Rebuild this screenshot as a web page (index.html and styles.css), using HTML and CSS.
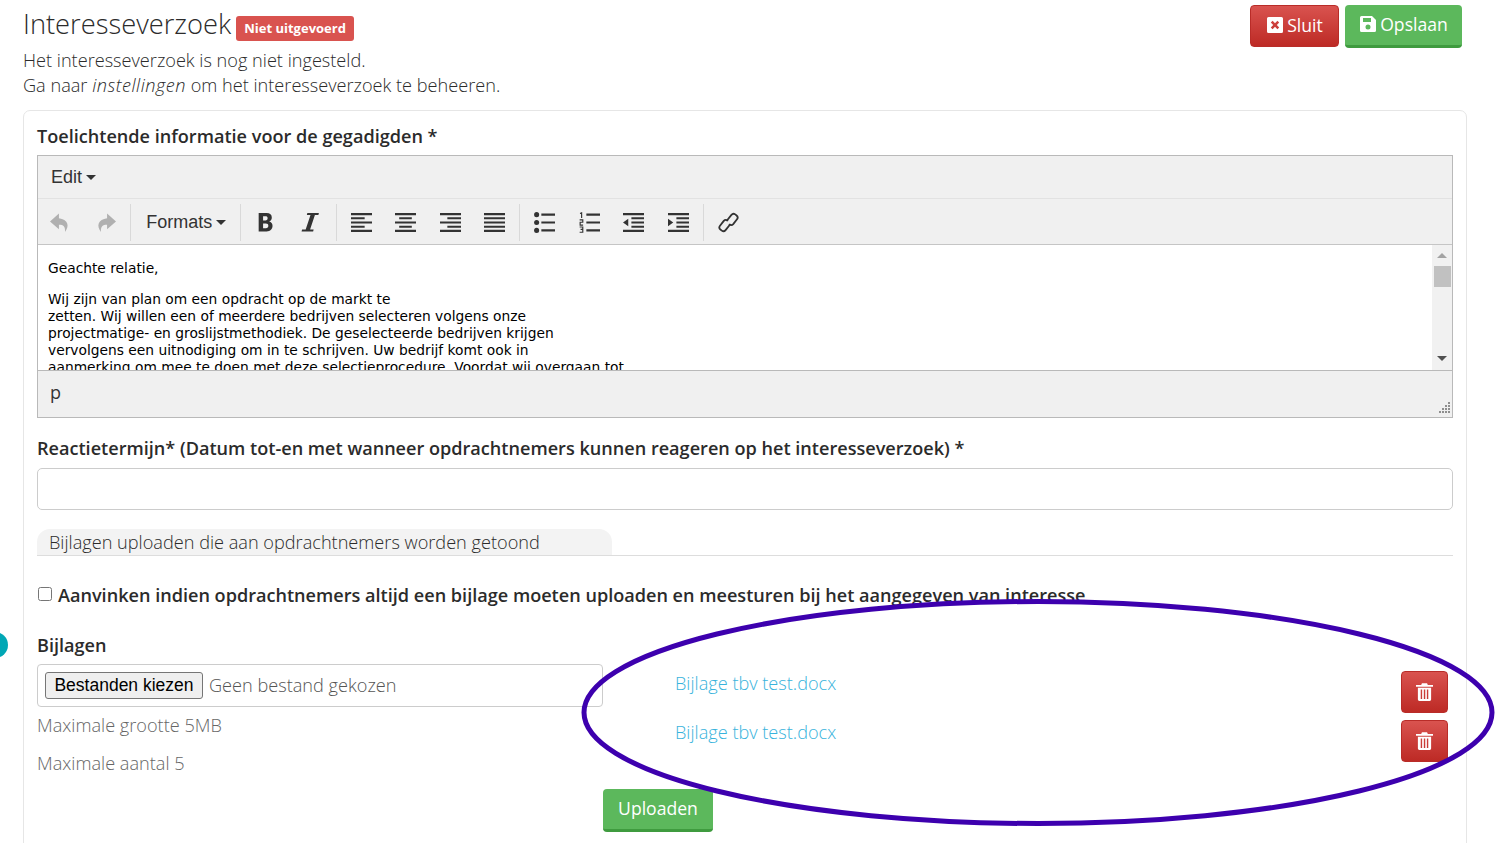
FILE: index.html
```html
<!DOCTYPE html>
<html lang="nl">
<head>
<meta charset="utf-8">
<title>Interesseverzoek</title>
<link rel="stylesheet" href="styles.css">
</head>
<body>
<div class="dot"></div>
<main class="page">
  <header class="head">
    <div class="head-text">
      <h1 class="title">Interesseverzoek <span class="badge">Niet uitgevoerd</span></h1>
    </div>
    <div class="actions">
      <button class="btn btn-red"><svg class="ico" viewBox="0 0 18 18"><path fill="#fff" fill-rule="evenodd" d="M2.500 1h13A1.500 1.500 0 0 1 17 2.500v13a1.500 1.500 0 0 1-1.500 1.500h-13A1.500 1.500 0 0 1 1 15.500v-13A1.500 1.500 0 0 1 2.500 1zM6.600 4.800 4.800 6.600 7.200 9l-2.400 2.400 1.800 1.800L9 10.800l2.400 2.400 1.800-1.800L10.800 9l2.400-2.400-1.800-1.800L9 7.200z"/></svg>Sluit</button>
      <button class="btn btn-green"><svg class="ico" viewBox="0 0 18 18"><path fill="#fff" fill-rule="evenodd" d="M2.500 1h10.500L17 5v10.500a1.500 1.500 0 0 1-1.500 1.500h-13A1.500 1.500 0 0 1 1 15.500v-13A1.500 1.500 0 0 1 2.500 1zM4 3v4h8V3zM9 9.500a2.500 2.500 0 1 0 0 5 2.500 2.500 0 0 0 0-5z"/></svg>Opslaan</button>
    </div>
  </header>
  <p class="intro">Het interesseverzoek is nog niet ingesteld.<br>Ga naar <em class="em">instellingen</em> om het interesseverzoek te beheeren.</p>

  <section class="card">
    <label class="lbl lbl-first">Toelichtende informatie voor de gegadigden *</label>
    <div class="editor">
      <div class="menubar"><span class="menu-item">Edit<i class="caret"></i></span></div>
      <div class="toolbar">
        <div class="tgroup first">
          <svg class="tico muted" viewBox="0 0 20 20"><path fill="currentColor" d="M8.500 1.500 0 9l8.500 7.500v-4.300c4.300 0 6.200 1.600 5.800 6.800C19 13 17 7.200 8.500 6z"/></svg>
          <svg class="tico muted" viewBox="0 0 20 20"><path fill="currentColor" d="M11.500 1.500 20 9l-8.500 7.500v-4.300c-4.300 0-6.200 1.600-5.800 6.800C1 13 3 7.200 11.500 6z"/></svg>
        </div>
        <div class="tgroup formats"><span class="menu-item">Formats<i class="caret"></i></span></div>
        <div class="tgroup text">
          <svg class="tico" viewBox="0 0 20 20"><path fill="currentColor" fill-rule="evenodd" d="M3.500 1h7.500c3.300 0 5 1.500 5 4.200 0 1.900-.9 3.200-2.600 3.800 2.100.5 3.300 2 3.300 4.200 0 3.200-2.100 5.300-5.700 5.300H3.500zM7.700 4.100v3.900h2.300c1.300 0 2-.7 2-2s-.7-1.900-2-1.900zM7.700 10.900v4.500h2.700c1.500 0 2.300-.8 2.300-2.200 0-1.500-.8-2.300-2.300-2.300z"/></svg>
          <svg class="tico" viewBox="0 0 20 20"><path fill="currentColor" d="M7 1h11l-.5 1.800h-3.300L9.600 16.700H13l-.5 1.800h-11l.5-1.800h3.400L10 2.800H6.500z"/></svg>
        </div>
        <div class="tgroup">
          <svg class="tico" viewBox="0 0 20 20"><path fill="currentColor" d="M0 1h20v2H0zM0 5h13v2H0zM0 9h20v2H0zM0 13h13v2H0zM0 17h20v2H0z"/></svg>
          <svg class="tico" viewBox="0 0 20 20"><path fill="currentColor" d="M0 1h20v2H0zM4 5h12v2H4zM0 9h20v2H0zM4 13h12v2H4zM0 17h20v2H0z"/></svg>
          <svg class="tico" viewBox="0 0 20 20"><path fill="currentColor" d="M0 1h20v2H0zM7 5h13v2H7zM0 9h20v2H0zM7 13h13v2H7zM0 17h20v2H0z"/></svg>
          <svg class="tico" viewBox="0 0 20 20"><path fill="currentColor" d="M0 1h20v2H0zM0 5h20v2H0zM0 9h20v2H0zM0 13h20v2H0zM0 17h20v2H0z"/></svg>
        </div>
        <div class="tgroup">
          <svg class="tico" viewBox="0 0 20 20"><circle cx="2.500" cy="2.500" r="2.400" fill="currentColor"/><circle cx="2.500" cy="10" r="2.400" fill="currentColor"/><circle cx="2.500" cy="17.500" r="2.400" fill="currentColor"/><path fill="currentColor" d="M7 1.500h13v2H7zM7 9h13v2H7zM7 16.500h13v2H7z"/></svg>
          <svg class="tico" viewBox="0 0 20 20"><path fill="none" stroke="currentColor" stroke-width="1.100" d="M1 1.500 2.500.8v5M.6 7.500h3v2.300H1.100V12.500h2.800M.6 14.300h3v2.300H1.500h2.100v2.700H.6"/><path fill="currentColor" d="M7 1.500h13v2H7zM7 9h13v2H7zM7 16.500h13v2H7z"/></svg>
          <svg class="tico" viewBox="0 0 20 20"><path fill="currentColor" d="M0 1h20v2H0zM8 5h12v2H8zM8 9h12v2H8zM8 13h12v2H8zM0 17h20v2H0zM5 6.500v7L0 10z"/></svg>
          <svg class="tico" viewBox="0 0 20 20"><path fill="currentColor" d="M0 1h20v2H0zM8 5h12v2H8zM8 9h12v2H8zM8 13h12v2H8zM0 17h20v2H0zM0 6.500v7L5 10z"/></svg>
        </div>
        <div class="tgroup last">
          <svg class="tico" viewBox="0 0 20 20"><g fill="none" stroke="currentColor" stroke-width="1.700" stroke-linecap="round" stroke-linejoin="round"><path d="M8.700 7.800 12.800 2.700a2.600 2.600 0 0 1 3.600-.4l1.300 1a2.600 2.600 0 0 1 .4 3.600L14.500 11.500a2.600 2.600 0 0 1-3.400.5"/><path d="M11.300 12.200 7.200 17.300a2.600 2.600 0 0 1-3.600.4l-1.300-1a2.600 2.600 0 0 1-.4-3.600L5.500 8.500a2.600 2.600 0 0 1 3.400-.5"/></g></svg>
        </div>
      </div>
      <div class="content">
        <div class="doc">
          <p class="doc-p">Geachte relatie,</p>
          <p class="doc-p">Wij zijn van plan om een opdracht op de markt te<br>zetten. Wij willen een of meerdere bedrijven selecteren volgens onze<br>projectmatige- en groslijstmethodiek. De geselecteerde bedrijven krijgen<br>vervolgens een uitnodiging om in te schrijven. Uw bedrijf komt ook in<br>aanmerking om mee te doen met deze selectieprocedure. Voordat wij overgaan tot</p>
        </div>
        <div class="scrollbar">
          <i class="sb-up"></i>
          <i class="sb-thumb"></i>
          <i class="sb-down"></i>
        </div>
      </div>
      <div class="statusbar"><span>p</span>
        <svg class="grip" viewBox="0 0 12 12"><path fill="#8f8f8f" d="M10 0h2v2h-2zM10 3h2v2h-2zM7 3h2v2H7zM10 6h2v2h-2zM7 6h2v2H7zM4 6h2v2H4zM10 9h2v2h-2zM7 9h2v2H7zM4 9h2v2H4zM1 9h2v2H1z"/></svg>
      </div>
    </div>

    <label class="lbl lbl-term">Reactietermijn* (Datum tot-en met wanneer opdrachtnemers kunnen reageren op het interesseverzoek) *</label>
    <input class="field" type="text" aria-label="Reactietermijn">

    <div class="tabline"><span class="tab">Bijlagen uploaden die aan opdrachtnemers worden getoond</span></div>

    <label class="check"><input class="check-box" type="checkbox"><span>Aanvinken indien opdrachtnemers altijd een bijlage moeten uploaden en meesturen bij het aangegeven van interesse</span></label>

    <div class="attach">
      <div class="attach-left">
        <label class="lbl lbl-bij">Bijlagen</label>
        <div class="file"><button class="file-btn">Bestanden kiezen</button><span class="file-name">Geen bestand gekozen</span></div>
        <p class="hint hint-a">Maximale grootte 5MB</p>
        <p class="hint hint-b">Maximale aantal 5</p>
      </div>
      <div class="attach-right">
        <div class="att-row"><a class="att-link" href="#">Bijlage tbv test.docx</a><button class="del" aria-label="Verwijderen"><svg class="trash" viewBox="0 0 18 20"><path fill="#fff" fill-rule="evenodd" d="M0 3h5.500l.8-1.800h5.400L12.500 3H18v2H0zM2 6h14v12.500a1.500 1.500 0 0 1-1.500 1.500h-11A1.500 1.500 0 0 1 2 18.500zM5 8v10h1.500V8zM8.300 8v10h1.500V8zM11.500 8v10H13V8z"/></svg></button></div>
        <div class="att-row"><a class="att-link" href="#">Bijlage tbv test.docx</a><button class="del" aria-label="Verwijderen"><svg class="trash" viewBox="0 0 18 20"><path fill="#fff" fill-rule="evenodd" d="M0 3h5.500l.8-1.800h5.400L12.500 3H18v2H0zM2 6h14v12.500a1.500 1.500 0 0 1-1.500 1.500h-11A1.500 1.500 0 0 1 2 18.500zM5 8v10h1.500V8zM8.300 8v10h1.500V8zM11.500 8v10H13V8z"/></svg></button></div>
      </div>
    </div>
    <div class="upload-row"><button class="btn btn-green btn-upload">Uploaden</button></div>
  </section>
</main>
<svg class="ring" viewBox="0 0 1495 843" aria-hidden="true"><ellipse cx="1038" cy="712.500" rx="454" ry="111" fill="none" stroke="#3d00ae" stroke-width="5"/></svg>
</body>
</html>
```
FILE: styles.css
```css
* { box-sizing: border-box; }
html, body { margin: 0; height: 843px; overflow: hidden; background: #fff; }
body { font-family: "Open Sans", sans-serif; font-weight: 300; font-size: 18.15px; color: #2b2b2b; position: relative; }

.dot { position: absolute; left: -18px; top: 632px; width: 26px; height: 26px; border-radius: 50%; background: #00a7b5; }
.ring { position: absolute; left: 0; top: 0; width: 1495px; height: 843px; pointer-events: none; }

.page { width: 1444px; margin-left: 23px; padding-top: 5px; }

.head { display: flex; justify-content: space-between; align-items: flex-start; height: 43px; padding-right: 5px; }
.title { margin: 0; font-size: 27.3px; line-height: 38px; font-weight: 300; color: #2b2b2b; }
.badge { display: inline-block; vertical-align: 1px; margin-left: -2px; padding: 0 8px; height: 25px; line-height: 25px; font-size: 13px; font-weight: 700; color: #fff; background: #d9534f; border-radius: 3px; }
.actions { display: flex; gap: 6px; }

.btn { display: inline-flex; align-items: center; justify-content: center; border: 0; color: #fff; font-family: "Open Sans", sans-serif; font-size: 17.6px; font-weight: 400; border-radius: 4px; cursor: pointer; }
.btn-red { width: 89px; height: 42px; background: linear-gradient(#d9534f, #bd2a25); border: 1px solid #b92c28; padding: 0 0 2px; }
.btn-green { width: 117px; height: 43px; background: #5cb85c; border-bottom: 3px solid #3f9b3f; padding: 0 0 3px; }
.ico { width: 18px; height: 18px; margin-right: 3px; }

.intro { margin: 0; line-height: 25px; }
.em { letter-spacing: 0.5px; }
.card { margin-top: 12px; height: 740px; border: 1px solid #e6e6e6; border-radius: 7px; padding: 0 13px; }

.lbl { display: block; font-weight: 600; font-size: 18.1px; color: #2b2b2b; line-height: 25px; }
.lbl-first { padding-top: 13px; height: 44px; }
.lbl-term { margin-top: 18px; height: 32px; }
.lbl-bij { height: 31px; }

.editor { border: 1px solid #b9b9b9; height: 263px; background: #f0f0f0; display: flex; flex-direction: column; font-family: "Liberation Sans", Arial, sans-serif; font-weight: 400; color: #333; }
.menubar { height: 43px; display: flex; align-items: center; padding-left: 13px; border-bottom: 1px solid #e2e2e2; }
.menu-item { display: inline-flex; align-items: center; font-size: 18px; color: #333; }
.caret { width: 0; height: 0; margin-left: 4px; border-left: 5px solid transparent; border-right: 5px solid transparent; border-top: 5px solid #333; }
.toolbar { height: 46px; display: flex; align-items: center; padding: 1px 0 0 0.5px; border-bottom: 1px solid #c5c5c5; }
.tgroup { display: flex; align-items: center; height: 37px; border-right: 1px solid #d9d9d9; padding: 0 2.25px; }
.tgroup.first { padding: 0 2.75px 0 0; }
.tgroup.text { padding-right: 3.25px; }
.tgroup.last { border-right: 0; }
.tgroup.formats { padding: 0 14px 0 15px; }
.tgroup .tico { margin: 0 11.75px; }
.tico { width: 21px; height: 21px; color: #333; display: block; flex: none; }
.tico.muted { color: #b0b0b0; }

.content { height: 125px; background: #fff; display: flex; overflow: hidden; }
.doc { flex: 1; padding: 15px 10px 0; font-family: "DejaVu Sans", Verdana, sans-serif; font-size: 13.8px; line-height: 17px; color: #000; overflow: hidden; }
.doc-p { margin: 0 0 14px; }
.scrollbar { width: 20px; background: #f1f1f1; display: flex; flex-direction: column; align-items: center; }
.sb-up { width: 0; height: 0; margin-top: 8px; border-left: 5px solid transparent; border-right: 5px solid transparent; border-bottom: 5px solid #a3a3a3; }
.sb-thumb { width: 17px; height: 21px; margin-top: 8px; background: #c1c1c1; }
.sb-down { width: 0; height: 0; margin-top: 69px; border-left: 5px solid transparent; border-right: 5px solid transparent; border-top: 5px solid #505050; }
.statusbar { flex: 1; border-top: 1px solid #b9b9b9; display: flex; justify-content: space-between; align-items: flex-end; padding: 0 2px 3px 12px; font-family: "Open Sans", sans-serif; font-size: 18px; font-weight: 400; }
.statusbar span { align-self: center; padding-bottom: 2px; }
.grip { width: 12px; height: 12px; }

.field { display: block; width: 100%; height: 42px; border: 1px solid #ccc; border-radius: 5px; background: #fff; }

.tabline { margin-top: 19px; height: 27px; border-bottom: 1px solid #ddd; }
.tab { display: block; width: 575px; height: 26px; line-height: 26px; padding-left: 12px; background: #f3f3f3; border-radius: 13px 13px 0 0; }

.check { display: flex; align-items: center; margin-top: 26px; height: 25px; font-weight: 600; font-size: 18.1px; color: #2b2b2b; white-space: nowrap; }
.check-box { width: 14px; height: 14px; margin: 0 6px 1px 1px; flex: none; }

.attach { display: flex; margin-top: 26px; }
.attach-left { width: 566px; flex: none; }
.file { height: 43px; border: 1px solid #ccc; border-radius: 4px; display: flex; align-items: center; padding-left: 7px; gap: 6px; color: #555; }
.file-name { padding-bottom: 2px; }
.file-btn { width: 158px; height: 27px; padding: 0; background: #efefef; border: 1px solid #767676; border-radius: 3px; font-family: "Liberation Sans", Arial, sans-serif; font-size: 17.5px; color: #000; }
.hint { margin: 0; color: #666; line-height: 25px; }
.hint-a { margin-top: 6px; }
.hint-b { margin-top: 13px; }

.attach-right { flex: 1; padding: 38px 5px 0 72px; display: flex; flex-direction: column; gap: 7px; }
.att-row { display: flex; justify-content: space-between; align-items: flex-start; height: 42px; }
.att-link { color: #38b3dc; text-decoration: none; line-height: 25px; }
.del { width: 47px; height: 42px; border: 1px solid #b92c28; border-radius: 4px; background: linear-gradient(#d9534f, #bd2a25); display: flex; align-items: center; justify-content: center; padding: 0 0 1px; }
.trash { width: 17px; height: 19px; }

.upload-row { padding-left: 566px; margin-top: 13px; }
.btn-upload { width: 110px; }
```
